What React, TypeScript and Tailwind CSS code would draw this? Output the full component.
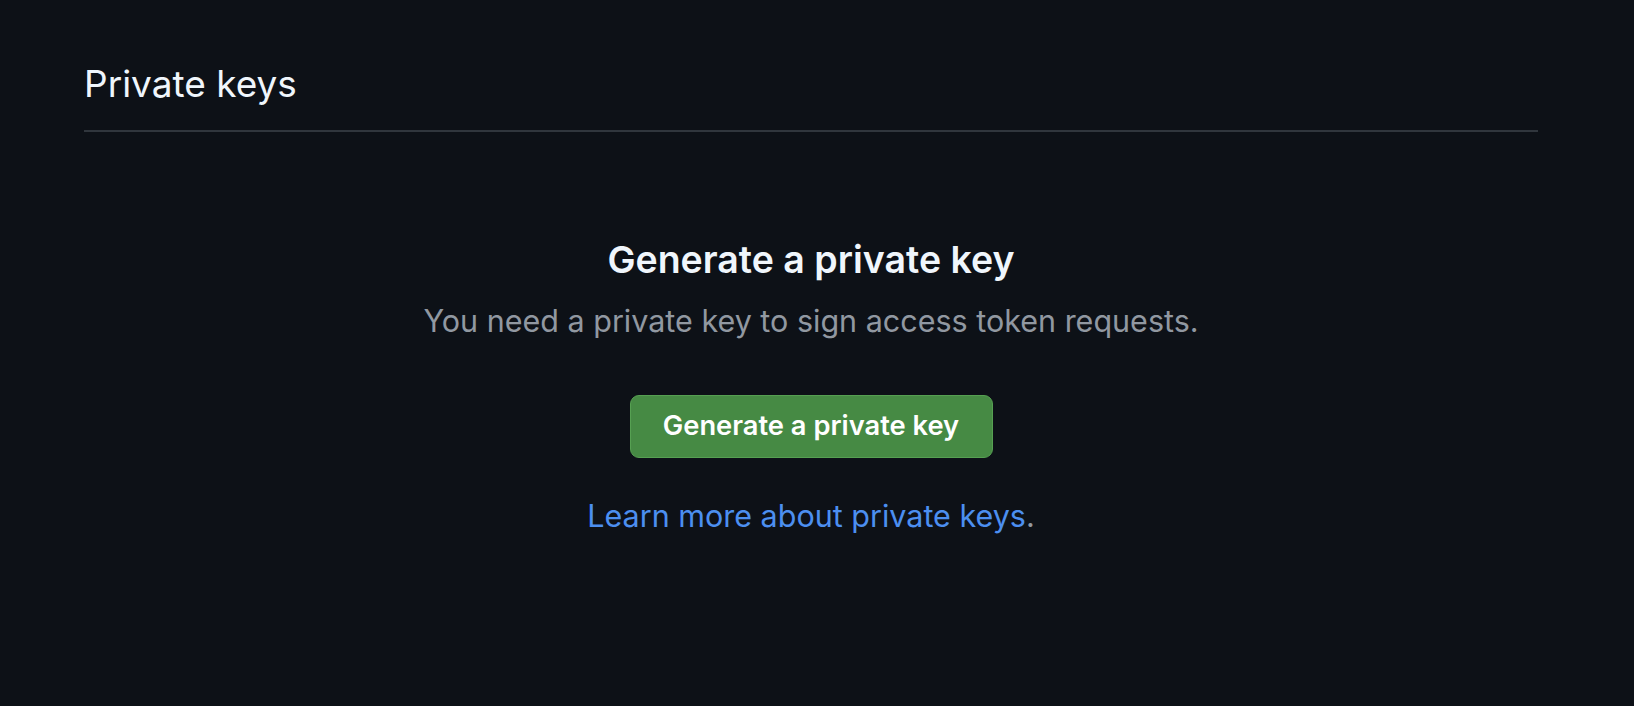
import React from 'react'

const font = { fontFamily: 'Inter, "Noto Sans", sans-serif' }

export default function App() {
  return (
    <div className="min-h-[706px] w-full bg-[#0d1117] text-[#f0f6fc]" style={font}>
      <div className="pl-[84px] pr-[96px] pt-[60px]">
        <div className="border-b-2 border-[#30363d] pb-[22px]">
          <h2 className="text-[37px] font-normal leading-[48px]">Private keys</h2>
        </div>

        <div className="flex flex-col items-center pt-[105px]">
          <h3 className="text-[37.5px] font-semibold leading-[46px]">Generate a private key</h3>
          <p className="mt-[19px] text-[30.5px] leading-[38px] text-[#9198a1]">
            You need a private key to sign access token requests.
          </p>
          <button
            type="button"
            className="mt-[55px] flex h-[63px] w-[363px] items-center justify-center rounded-[9px] border border-[#56a052] bg-[#468a44] text-[27.3px] font-semibold text-white"
          >
            Generate a private key
          </button>
          <p className="mt-[39px] text-[30.5px] leading-[38px] text-[#9198a1]">
            <a href="#" className="text-[#4c8ff0]">Learn more about private keys</a>.
          </p>
        </div>
      </div>
    </div>
  )
}
